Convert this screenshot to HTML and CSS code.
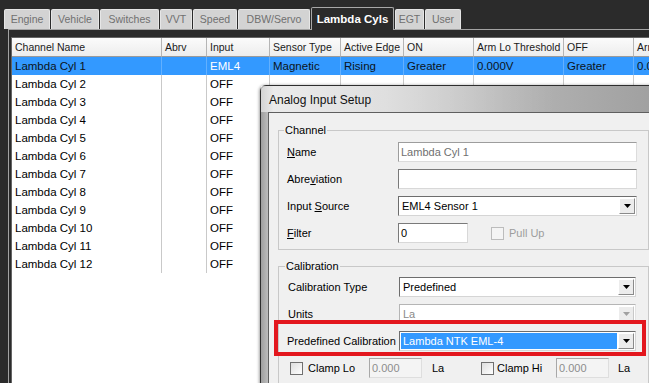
FILE: index.html
```html
<!DOCTYPE html>
<html>
<head>
<meta charset="utf-8">
<link rel="stylesheet" href="styles.css">
</head>
<body>
<div class="app">
  <div class="tabs">
    <div class="tab t-engine">Engine</div>
    <div class="tab t-vehicle">Vehicle</div>
    <div class="tab t-switches">Switches</div>
    <div class="tab t-vvt">VVT</div>
    <div class="tab t-speed">Speed</div>
    <div class="tab t-dbw">DBW/Servo</div>
    <div class="tab active t-lambda">Lambda Cyls</div>
    <div class="tab t-egt">EGT</div>
    <div class="tab t-user">User</div>
  </div>
  <div class="panel">
    <div class="list">
      <div class="row head">
        <div class="c">Channel Name</div><div class="c">Abrv</div><div class="c">Input</div><div class="c">Sensor Type</div><div class="c">Active Edge</div><div class="c">ON</div><div class="c">Arm Lo Threshold</div><div class="c">OFF</div><div class="c">Arm Hi Threshold</div>
      </div>
      <div class="row sel">
        <div class="c">Lambda Cyl 1</div><div class="c"></div><div class="c hl">EML4</div><div class="c">Magnetic</div><div class="c">Rising</div><div class="c">Greater</div><div class="c">0.000V</div><div class="c">Greater</div><div class="c">0.000V</div>
      </div>
      <div class="row"><div class="c">Lambda Cyl 2</div><div class="c"></div><div class="c">OFF</div><div class="c"></div><div class="c"></div><div class="c"></div><div class="c"></div><div class="c"></div><div class="c"></div></div>
      <div class="row"><div class="c">Lambda Cyl 3</div><div class="c"></div><div class="c">OFF</div><div class="c"></div><div class="c"></div><div class="c"></div><div class="c"></div><div class="c"></div><div class="c"></div></div>
      <div class="row"><div class="c">Lambda Cyl 4</div><div class="c"></div><div class="c">OFF</div><div class="c"></div><div class="c"></div><div class="c"></div><div class="c"></div><div class="c"></div><div class="c"></div></div>
      <div class="row"><div class="c">Lambda Cyl 5</div><div class="c"></div><div class="c">OFF</div><div class="c"></div><div class="c"></div><div class="c"></div><div class="c"></div><div class="c"></div><div class="c"></div></div>
      <div class="row"><div class="c">Lambda Cyl 6</div><div class="c"></div><div class="c">OFF</div><div class="c"></div><div class="c"></div><div class="c"></div><div class="c"></div><div class="c"></div><div class="c"></div></div>
      <div class="row"><div class="c">Lambda Cyl 7</div><div class="c"></div><div class="c">OFF</div><div class="c"></div><div class="c"></div><div class="c"></div><div class="c"></div><div class="c"></div><div class="c"></div></div>
      <div class="row"><div class="c">Lambda Cyl 8</div><div class="c"></div><div class="c">OFF</div><div class="c"></div><div class="c"></div><div class="c"></div><div class="c"></div><div class="c"></div><div class="c"></div></div>
      <div class="row"><div class="c">Lambda Cyl 9</div><div class="c"></div><div class="c">OFF</div><div class="c"></div><div class="c"></div><div class="c"></div><div class="c"></div><div class="c"></div><div class="c"></div></div>
      <div class="row"><div class="c">Lambda Cyl 10</div><div class="c"></div><div class="c">OFF</div><div class="c"></div><div class="c"></div><div class="c"></div><div class="c"></div><div class="c"></div><div class="c"></div></div>
      <div class="row"><div class="c">Lambda Cyl 11</div><div class="c"></div><div class="c">OFF</div><div class="c"></div><div class="c"></div><div class="c"></div><div class="c"></div><div class="c"></div><div class="c"></div></div>
      <div class="row"><div class="c">Lambda Cyl 12</div><div class="c"></div><div class="c">OFF</div><div class="c"></div><div class="c"></div><div class="c"></div><div class="c"></div><div class="c"></div><div class="c"></div></div>
    </div>
  </div>

  <div class="dialog">
    <div class="titlebar">Analog Input Setup</div>
    <div class="client">
      <fieldset class="group channel">
        <legend>Channel</legend>
        <div class="frow"><span class="lbl"><u>N</u>ame</span><div class="tb ro wide">Lambda Cyl 1</div></div>
        <div class="frow"><span class="lbl">Abre<u>v</u>iation</span><div class="tb wide"></div></div>
        <div class="frow"><span class="lbl">Input <u>S</u>ource</span><div class="cb wide"><span class="cb-text">EML4 Sensor 1</span><span class="btn"><svg width="7" height="4" viewBox="0 0 7 4"><path d="M0 0H7L3.5 4Z" fill="#000"/></svg></span></div></div>
        <div class="frow"><span class="lbl"><u>F</u>ilter</span><div class="tb filter">0</div><span class="chk dis"></span><span class="chk-lbl dis-text">Pull Up</span></div>
      </fieldset>
      <fieldset class="group cal">
        <legend>Calibration</legend>
        <div class="frow"><span class="lbl">Calibration Type</span><div class="cb wide2"><span class="cb-text">Predefined</span><span class="btn"><svg width="7" height="4" viewBox="0 0 7 4"><path d="M0 0H7L3.5 4Z" fill="#000"/></svg></span></div></div>
        <div class="frow"><span class="lbl">Units</span><div class="cb wide2 disabled"><span class="cb-text">La</span><span class="btn"><svg width="7" height="4" viewBox="0 0 7 4"><path d="M0 0H7L3.5 4Z" fill="#a0a0a0"/></svg></span></div></div>
        <div class="frow highlight"><span class="lbl lbl-pre">Predefined Calibration</span><div class="cb wide2 focus"><span class="cb-text">Lambda NTK EML-4</span><span class="btn"><svg width="7" height="4" viewBox="0 0 7 4"><path d="M0 0H7L3.5 4Z" fill="#000"/></svg></span></div></div>
        <div class="frow clamp">
          <span class="chk"></span><span class="chk-lbl lo">Clamp Lo</span>
          <div class="tb small dis-box">0.000</div><span class="unit">La</span>
          <span class="chk"></span><span class="chk-lbl hi">Clamp Hi</span>
          <div class="tb small dis-box">0.000</div><span class="unit last">La</span>
        </div>
      </fieldset>
    </div>
  </div>
</div>
</body>
</html>
```

FILE: styles.css
```css
html, body {
  margin: 0;
  padding: 0;
}
body {
  background: #2b2b2b;
  font-family: "Liberation Sans", Arial, sans-serif;
}
.app {
  position: relative;
  width: 649px;
  height: 383px;
  overflow: hidden;
  background: #2b2b2b;
}

/* Tabs */
.tabs {
  display: flex;
  align-items: flex-end;
  gap: 1px;
  height: 29px;
  padding-left: 4px;
  box-sizing: border-box;
}
.tab {
  height: 20px;
  box-sizing: border-box;
  background: #d3d3d3;
  border: 1px solid #e6e6e6;
  border-bottom: none;
  border-radius: 2px 2px 0 0;
  color: #707070;
  font-size: 10.5px;
  line-height: 19px;
  text-align: center;
}
.t-engine { width: 46px; }
.t-vehicle { width: 48px; }
.t-switches { width: 59px; }
.t-vvt { width: 32px; }
.t-speed { width: 44px; }
.t-dbw { width: 72px; }
.t-lambda { width: 83px; }
.t-egt { width: 29px; }
.t-user { width: 36px; }
.tab.active {
  position: relative;
  z-index: 1;
  height: 23px;
  margin-bottom: -1px;
  background: #2b2b2b;
  border: 1px solid #a8a8a8;
  border-bottom: none;
  color: #fff;
  font-weight: bold;
  font-size: 11.5px;
  line-height: 22px;
}

/* Panel */
.panel {
  margin-left: 8px;
  border-left: 1px solid #a3a3a3;
  border-top: 1px solid #a3a3a3;
  padding: 7px 0 0 2px;
  height: 360px;
}
.list {
  border: 1px solid #646464;
  border-right: none;
  background: #fff;
  height: 360px;
  width: 720px;
}
.row {
  display: grid;
  grid-template-columns: 150px 45px 63px 71px 63px 70px 90px 70px 80px;
  height: 18px;
}
.c {
  box-sizing: border-box;
  border-right: 1px solid #c9c9c9;
  padding-left: 3px;
  font-size: 11.5px;
  line-height: 18px;
  color: #000;
  white-space: nowrap;
  overflow: hidden;
}
.row.head {
  height: 19px;
  background: linear-gradient(#fbfbfb, #ececec);
}
.row.head .c {
  border-right: 1px solid #b5b5b5;
  border-bottom: 1px solid #9a9a9a;
  font-size: 10.5px;
  line-height: 18px;
  color: #1a1a1a;
}
.row.sel {
  background: #3399ff;
}
.row.sel .c {
  color: #0c1420;
  border-right-color: #62b0ff;
}
.row.sel .c.hl {
  color: #fff;
}

/* Dialog */
.dialog {
  position: absolute;
  left: 260px;
  top: 85px;
  width: 420px;
  height: 320px;
  border: 1px solid #2e2e2e;
  border-radius: 6px 6px 0 0;
  background: linear-gradient(to right, #9f9f9f 0%, #d4d4d4 3%, #cfcfcf 30%, #b4b4b4 60%, #9c9c9c 100%);
  box-shadow: -1px 0 3px rgba(0,0,0,0.35);
}
.titlebar {
  height: 26px;
  padding-left: 8px;
  font-size: 12px;
  line-height: 28px;
  color: #111;
  background: linear-gradient(to right, rgba(255,255,255,0.55), rgba(255,255,255,0.25) 40%, rgba(255,255,255,0) 70%);
}
.client {
  margin-left: 7px;
  border: 1px solid #5f5f5f;
  border-right: none;
  background: #f0f0f0;
  height: 300px;
  padding: 10px 0 0 9px;
  font-size: 11px;
  color: #000;
}
.group {
  margin: 0;
  width: 371px;
  box-sizing: border-box;
  border: 1px solid #c8c8c8;
  padding: 5px 0 6px 8px;
  display: flex;
  flex-direction: column;
  gap: 7px;
}
.group legend {
  padding: 0 1px;
  margin-left: -3px;
  line-height: 14px;
  font-size: 11px;
}
.group.cal {
  margin-top: 9px;
  padding: 4px 0 6px 9px;
}
.frow {
  display: flex;
  align-items: center;
  height: 20px;
  white-space: nowrap;
}
.lbl {
  width: 111px;
  flex: none;
}
.tb, .cb {
  box-sizing: border-box;
  flex: none;
  height: 20px;
  background: #fff;
  border: 1px solid;
  border-color: #7a7a7a #d8d8d8 #d8d8d8 #7a7a7a;
  padding-left: 2px;
  line-height: 18px;
  font-size: 11px;
  white-space: nowrap;
}
.tb.wide, .cb.wide { width: 239px; }
.cb.wide2 { width: 237px; }
.tb.ro { color: #707070; border-color: #9d9d9d #dcdcdc #dcdcdc #9d9d9d; }
.tb.filter { width: 70px; }
.cb {
  display: flex;
  align-items: stretch;
  padding: 1px;
  border-color: #6d6d6d #d5d5d5 #d5d5d5 #6d6d6d;
}
.cb-text {
  flex: 1;
  padding-left: 2px;
  line-height: 16px;
}
.btn {
  width: 16px;
  box-sizing: border-box;
  background: #ececec;
  border: 1px solid;
  border-color: #ffffff #8a8a8a #8a8a8a #ffffff;
  display: flex;
  align-items: center;
  justify-content: center;
}
.cb.disabled { color: #8a8a8a; border-color: #b5b5b5 #e3e3e3 #e3e3e3 #b5b5b5; }
.cb.disabled .btn { border-color: #fff #c8c8c8 #c8c8c8 #fff; }
.cb.focus .cb-text {
  background: #3399ff;
  color: #fff;
  margin-right: 1px;
}
.highlight {
  position: relative;
}
.highlight::before {
  content: "";
  position: absolute;
  left: -14px;
  right: 2px;
  top: -11px;
  bottom: -5px;
  border: 4px solid #e3171e;
}
.lbl-pre { margin-left: -1px; width: 112px; }
.chk {
  width: 13px;
  height: 13px;
  box-sizing: border-box;
  border: 1px solid #707070;
  background: linear-gradient(135deg, #dedede, #ffffff);
  flex: none;
}
.chk.dis { border-color: #bcbcbc; background: #f4f4f4; margin-left: 23px; }
.chk-lbl { margin-left: 5px; flex: none; }
.chk-lbl.lo { width: 61px; }
.chk-lbl.hi { margin-left: 3px; width: 59px; }
.dis-text { color: #9d9d9d; }
.clamp { padding-left: 2px; }
.tb.small {
  width: 53px;
}
.dis-box {
  background: #f4f4f4;
  color: #8d8d8d;
  border-color: #a8a8a8 #dedede #dedede #a8a8a8;
}
.unit { margin-left: 10px; width: 49px; flex: none; }
.unit.last { margin-left: 9px; width: auto; }
```
